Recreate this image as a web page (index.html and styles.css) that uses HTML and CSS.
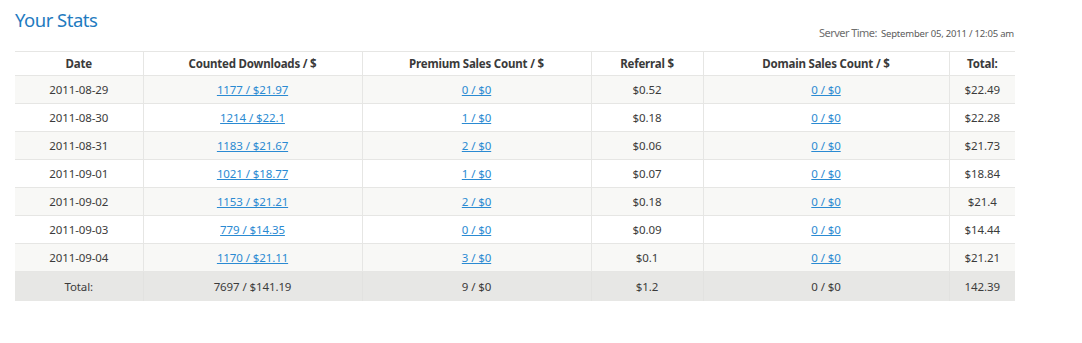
FILE: index.html
```html
<!DOCTYPE html>
<html>
<head>
<meta charset="utf-8">
<link rel="stylesheet" href="styles.css">
</head>
<body>
<div class="page">
  <div class="head">
    <h2 class="title">Your Stats</h2>
    <div class="server"><span class="server-label">Server Time:</span> <span class="server-date">September 05, 2011 / 12:05 am</span></div>
  </div>
  <table class="stats">
    <colgroup>
      <col class="c1"><col class="c2"><col class="c3"><col class="c4"><col class="c5"><col class="c6">
    </colgroup>
    <thead>
      <tr><th>Date</th><th>Counted Downloads / $</th><th>Premium Sales Count / $</th><th>Referral $</th><th>Domain Sales Count / $</th><th>Total:</th></tr>
    </thead>
    <tbody>
      <tr class="odd"><td>2011-08-29</td><td><a href="#">1177 / $21.97</a></td><td><a href="#">0 / $0</a></td><td>$0.52</td><td><a href="#">0 / $0</a></td><td>$22.49</td></tr>
      <tr><td>2011-08-30</td><td><a href="#">1214 / $22.1</a></td><td><a href="#">1 / $0</a></td><td>$0.18</td><td><a href="#">0 / $0</a></td><td>$22.28</td></tr>
      <tr class="odd"><td>2011-08-31</td><td><a href="#">1183 / $21.67</a></td><td><a href="#">2 / $0</a></td><td>$0.06</td><td><a href="#">0 / $0</a></td><td>$21.73</td></tr>
      <tr><td>2011-09-01</td><td><a href="#">1021 / $18.77</a></td><td><a href="#">1 / $0</a></td><td>$0.07</td><td><a href="#">0 / $0</a></td><td>$18.84</td></tr>
      <tr class="odd"><td>2011-09-02</td><td><a href="#">1153 / $21.21</a></td><td><a href="#">2 / $0</a></td><td>$0.18</td><td><a href="#">0 / $0</a></td><td>$21.4</td></tr>
      <tr><td>2011-09-03</td><td><a href="#">779 / $14.35</a></td><td><a href="#">0 / $0</a></td><td>$0.09</td><td><a href="#">0 / $0</a></td><td>$14.44</td></tr>
      <tr class="odd"><td>2011-09-04</td><td><a href="#">1170 / $21.11</a></td><td><a href="#">3 / $0</a></td><td>$0.1</td><td><a href="#">0 / $0</a></td><td>$21.21</td></tr>
    </tbody>
    <tfoot>
      <tr><td>Total:</td><td>7697 / $141.19</td><td>9 / $0</td><td>$1.2</td><td>0 / $0</td><td>142.39</td></tr>
    </tfoot>
  </table>
</div>
</body>
</html>
```
FILE: styles.css
```css
html, body {
  margin: 0;
  padding: 0;
  background: #ffffff;
}
body {
  font-family: "Noto Sans", "Open Sans", sans-serif;
  color: #3b3b3b;
}
.page {
  width: 1000px;
  padding: 8px 0 0 15px;
}
.head {
  display: flex;
  justify-content: space-between;
  align-items: flex-start;
  height: 43px;
}
.title {
  margin: 0;
  font-size: 18.5px;
  font-weight: normal;
  color: #1f7bbf;
  line-height: 24px;
  letter-spacing: -0.5px;
}
.server {
  margin-top: 16px;
  margin-right: 1px;
  color: #6e6e6e;
  line-height: 14px;
}
.server-label {
  font-size: 11px;
  letter-spacing: -0.55px;
}
.server-date {
  font-size: 9.5px;
  letter-spacing: -0.2px;
  color: #5a5a5a;
}
.stats {
  width: 1000px;
  border-collapse: collapse;
  table-layout: fixed;
  font-size: 11.5px;
}
.c1 { width: 128px; }
.c2 { width: 219px; }
.c3 { width: 229px; }
.c4 { width: 112px; }
.c5 { width: 246px; }
.c6 { width: 66px; }
.stats th, .stats td {
  border: 1px solid #e6e6e4;
  text-align: center;
  padding: 0;
  letter-spacing: -0.1px;
}
.stats tr > :first-child { border-left: none; }
.stats tr > :last-child { border-right: none; }
.stats th {
  height: 23px;
  font-weight: bold;
  color: #3a3a3a;
  letter-spacing: -0.2px;
}
.stats tbody td {
  height: 27px;
}
.stats tbody tr.odd td {
  background: #f8f8f6;
}
.stats a {
  color: #2a8ad2;
  text-decoration: underline;
}
.stats tfoot td {
  height: 29px;
  background: #e7e7e5;
  border: none;
  border-left: 1px solid #e2e2e0;
}
.stats tfoot td:first-child { border-left: none; }
```
